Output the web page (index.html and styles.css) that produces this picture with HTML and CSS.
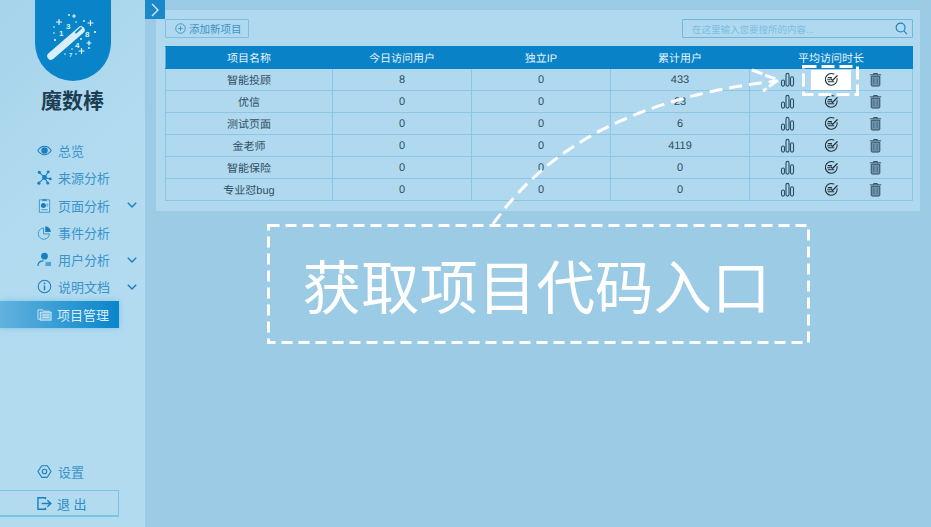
FILE: index.html
```html
<!DOCTYPE html>
<html lang="zh-CN">
<head>
    <meta charset="UTF-8">
    <meta name="viewport" content="width=device-width, initial-scale=1.0">
    <title>魔数棒</title>
    <link rel="stylesheet" href="styles.css">
</head>
<body>
    <!-- shared table icons -->
    <svg class="defs" width="0" height="0">
        <symbol id="i-bars" viewBox="0 0 16 16">
            <g fill="none" stroke="#2c5069" stroke-width="1.2">
                <rect x="1.6" y="8.5" width="3.2" height="6.5" rx="1.6"/>
                <rect x="6.4" y="1.5" width="3.2" height="13.5" rx="1.6"/>
                <rect x="11.2" y="5" width="3.2" height="10" rx="1.6"/>
            </g>
        </symbol>
        <symbol id="i-code" viewBox="0 0 16 16">
            <g fill="none" stroke="#1f2f3a" stroke-width="1.1" stroke-linecap="round">
                <path d="M14 7A6.3 6.3 0 1 1 10.5 2.2"/>
                <path d="M4.500 6h3.500M3.800 8.200h2.700M4.500 10.500h6"/>
                <path d="M7.500 7.500l1.600 1.500 4.900-5" stroke-width="1.3"/>
            </g>
        </symbol>
        <symbol id="i-trash" viewBox="0 0 16 16">
            <path d="M3.4 4.500h9.200v9.300a1.200 1.200 0 0 1-1.200 1.200H4.600a1.200 1.200 0 0 1-1.200-1.200z" fill="#6f93a8" stroke="#2c4a5e" stroke-width="1"/>
            <path d="M2 3h12M6 3V1.600h4V3" fill="none" stroke="#2c4a5e" stroke-width="1"/>
            <path d="M6.200 6.500v6.500M9.800 6.500v6.500" fill="none" stroke="#3f6378" stroke-width="0.8"/>
        </symbol>
    </svg>

    <div class="page">
        <aside class="sidebar">
            <div class="logo">
                <svg class="logo-badge" width="76" height="81" viewBox="0 0 76 81">
                    <path d="M0 0H76V43A38 38 0 0 1 0 43z" fill="#0a84c9"/>
                    <path d="M16 56L46 30" stroke="#d9eef8" stroke-width="7.5" stroke-linecap="round"/>
                    <path d="M41 32.500l5-4.500" stroke="#0a84c9" stroke-width="1.8" stroke-linecap="round"/>
                    <g fill="#d9eef8" font-family="Liberation Sans, sans-serif" font-size="8" font-weight="700">
                        <text x="24" y="36">1</text>
                        <text x="31" y="29">3</text>
                        <text x="50" y="37">8</text>
                        <text x="40" y="48">4</text>
                        <text x="34" y="57" font-size="6">7</text>
                    </g>
                    <g stroke="#e8f5fb" stroke-width="1.2" stroke-linecap="round">
                        <path d="M21.500 22h5M24 19.500v5M53 23h5M55.500 20.500v5M44 51h5M46.500 48.500v5M52 43h4M54 41v4M37.500 16h3M39 14.500v3"/>
                    </g>
                    <g fill="#e8f5fb">
                        <circle cx="19" cy="27" r="0.8"/><circle cx="19" cy="33" r="0.8"/><circle cx="20" cy="40" r="1.1"/>
                        <circle cx="34" cy="15" r="0.9"/><circle cx="41" cy="22" r="0.8"/><circle cx="49" cy="21" r="0.9"/>
                        <circle cx="60" cy="32" r="1.1"/><circle cx="46" cy="39" r="0.9"/><circle cx="37" cy="49" r="0.8"/>
                        <circle cx="30" cy="54" r="0.8"/><circle cx="41" cy="54" r="0.8"/><circle cx="54" cy="48" r="0.9"/>
                    </g>
                </svg>
                <div class="logo-name">魔数棒</div>
            </div>

            <nav class="nav">
                <a class="nav-item">
                    <svg class="nav-icon" viewBox="0 0 16 16"><path d="M.8 8C3 4.800 5.300 3.500 8 3.500S13 4.800 15.200 8C13 11.200 10.700 12.500 8 12.500S3 11.200.8 8z" fill="none" stroke="#1a7fbe" stroke-width="1.1"/><circle cx="8" cy="8" r="3.4" fill="#1a7fbe"/></svg>
                    <span>总览</span>
                </a>
                <a class="nav-item">
                    <svg class="nav-icon" viewBox="0 0 16 16"><path d="M2.500 2.500L8 8M12 2L8 8M2 14L8 8M14 9.500L8 8M11.500 14L8 8" stroke="#1a7fbe" stroke-width="1.1"/><g fill="#1a7fbe"><circle cx="8" cy="8" r="2.6"/><circle cx="2.5" cy="2.5" r="1.7"/><circle cx="12" cy="2" r="1.5"/><circle cx="2" cy="14" r="1.7"/><circle cx="14.2" cy="9.5" r="1.5"/><circle cx="11.5" cy="14" r="1.5"/></g></svg>
                    <span>来源分析</span>
                </a>
                <a class="nav-item">
                    <svg class="nav-icon" viewBox="0 0 16 16"><path d="M5.500 2H2.500v13.200h11V2h-3" fill="#c2e2f2" stroke="#3b93cc" stroke-width="1"/><rect x="5.5" y="1" width="5" height="2.4" fill="#3b93cc"/><circle cx="6.8" cy="8" r="2.7" fill="#1a7fbe"/><path d="M10 6.500h2M10 8.500h2M4.500 12.500h7" stroke="#3b93cc" stroke-width="1"/></svg>
                    <span>页面分析</span>
                    <svg class="nav-arrow" viewBox="0 0 10 6"><path d="M.8.800L5 5 9.200.800" fill="none" stroke="#1a7fbe" stroke-width="1.4"/></svg>
                </a>
                <a class="nav-item">
                    <svg class="nav-icon" viewBox="0 0 16 16"><path d="M7 3.200A6 6 0 1 0 13.300 9.500H7z" fill="none" stroke="#3b93cc" stroke-width="1"/><path d="M8.800 1.300A6 6 0 0 1 14.800 7.500H8.800z" fill="#1a7fbe"/></svg>
                    <span>事件分析</span>
                </a>
                <a class="nav-item">
                    <svg class="nav-icon" viewBox="0 0 16 16"><circle cx="8" cy="4.5" r="3.6" fill="#1a7fbe"/><path d="M1 15c0-3.800 2.800-5.500 6-5.500" fill="none" stroke="#1a7fbe" stroke-width="1.2"/><path d="M9 10.500h6v4.500H9z" fill="#4fa3d6"/></svg>
                    <span>用户分析</span>
                    <svg class="nav-arrow" viewBox="0 0 10 6"><path d="M.8.800L5 5 9.200.800" fill="none" stroke="#1a7fbe" stroke-width="1.4"/></svg>
                </a>
                <a class="nav-item">
                    <svg class="nav-icon" viewBox="0 0 16 16"><circle cx="8" cy="8" r="6.7" fill="none" stroke="#1a7fbe" stroke-width="1.1"/><path d="M8 7v5" stroke="#1a7fbe" stroke-width="1.5"/><circle cx="8" cy="4.7" r="1" fill="#1a7fbe"/></svg>
                    <span>说明文档</span>
                    <svg class="nav-arrow" viewBox="0 0 10 6"><path d="M.8.800L5 5 9.200.800" fill="none" stroke="#1a7fbe" stroke-width="1.4"/></svg>
                </a>
                <a class="nav-item active">
                    <svg class="nav-icon" viewBox="0 0 16 16"><path d="M1 3h5l1 1.500h6V13H1z" fill="none" stroke="#cfe8f5" stroke-width="1"/><rect x="3.5" y="5.500" width="11.500" height="8.500" fill="#7fbfe3" stroke="#cfe8f5" stroke-width="1"/><path d="M6 8.500h7M6 11h7" stroke="#e2f2fa" stroke-width="1"/></svg>
                    <span>项目管理</span>
                </a>
            </nav>

            <div class="side-bottom">
                <a class="nav-item settings">
                    <svg class="nav-icon" viewBox="0 0 16 16"><path d="M5 1.800h6L15 8l-4 6.200H5L1 8z" fill="none" stroke="#1a7fbe" stroke-width="1.2" stroke-linejoin="round"/><circle cx="8" cy="8" r="2.4" fill="none" stroke="#1a7fbe" stroke-width="1.2"/></svg>
                    <span>设置</span>
                </a>
                <a class="logout">
                    <svg class="nav-icon" viewBox="0 0 16 16"><path d="M9 3.500V1.800H1v12.400h8v-1.700" fill="none" stroke="#1a7fbe" stroke-width="1.5"/><path d="M5 8h9M11 4.500L14.800 8 11 11.500" fill="none" stroke="#1a7fbe" stroke-width="1.5"/></svg>
                    <span>退 出</span>
                </a>
            </div>
        </aside>

        <main class="main">
            <div class="panel">
                <div class="toolbar">
                    <button class="add-btn">
                        <svg width="11" height="11" viewBox="0 0 12 12"><circle cx="6" cy="6" r="5.2" fill="none" stroke="#3b93cc"/><path d="M3.500 6h5M6 3.500v5" stroke="#3b93cc"/></svg>
                        添加新项目
                    </button>
                    <div class="search">
                        <span class="search-text">在这里输入您要搜所的内容...</span>
                        <svg width="13" height="13" viewBox="0 0 14 14"><circle cx="6" cy="6" r="4.8" fill="none" stroke="#1a7fbe" stroke-width="1.2"/><path d="M9.500 9.500L13 13" stroke="#1a7fbe" stroke-width="1.2"/></svg>
                    </div>
                </div>

                <table class="project-table">
                    <colgroup>
                        <col class="col-name"><col class="col-num"><col class="col-num"><col class="col-num"><col>
                    </colgroup>
                    <thead>
                        <tr><th>项目名称</th><th>今日访问用户</th><th>独立IP</th><th>累计用户</th><th>平均访问时长</th></tr>
                    </thead>
                    <tbody>
                        <tr>
                            <td>智能投顾</td><td>8</td><td>0</td><td>433</td>
                            <td><div class="ops"><span class="op"><svg><use href="#i-bars"/></svg></span><span class="op lit"><svg><use href="#i-code"/></svg></span><span class="op"><svg><use href="#i-trash"/></svg></span></div></td>
                        </tr>
                        <tr>
                            <td>优信</td><td>0</td><td>0</td><td>23</td>
                            <td><div class="ops"><span class="op"><svg><use href="#i-bars"/></svg></span><span class="op"><svg><use href="#i-code"/></svg></span><span class="op"><svg><use href="#i-trash"/></svg></span></div></td>
                        </tr>
                        <tr>
                            <td>测试页面</td><td>0</td><td>0</td><td>6</td>
                            <td><div class="ops"><span class="op"><svg><use href="#i-bars"/></svg></span><span class="op"><svg><use href="#i-code"/></svg></span><span class="op"><svg><use href="#i-trash"/></svg></span></div></td>
                        </tr>
                        <tr>
                            <td>金老师</td><td>0</td><td>0</td><td>4119</td>
                            <td><div class="ops"><span class="op"><svg><use href="#i-bars"/></svg></span><span class="op"><svg><use href="#i-code"/></svg></span><span class="op"><svg><use href="#i-trash"/></svg></span></div></td>
                        </tr>
                        <tr>
                            <td>智能保险</td><td>0</td><td>0</td><td>0</td>
                            <td><div class="ops"><span class="op"><svg><use href="#i-bars"/></svg></span><span class="op"><svg><use href="#i-code"/></svg></span><span class="op"><svg><use href="#i-trash"/></svg></span></div></td>
                        </tr>
                        <tr>
                            <td>专业怼bug</td><td>0</td><td>0</td><td>0</td>
                            <td><div class="ops"><span class="op"><svg><use href="#i-bars"/></svg></span><span class="op"><svg><use href="#i-code"/></svg></span><span class="op"><svg><use href="#i-trash"/></svg></span></div></td>
                        </tr>
                    </tbody>
                </table>
            </div>

            <div class="callout">获取项目代码入口</div>
        </main>

        <button class="toggle">
            <svg width="8" height="14" viewBox="0 0 8 14"><path d="M1 1l6 6-6 6" fill="none" stroke="#d9eef8" stroke-width="1.3"/></svg>
        </button>

        <!-- annotation drawn over the table -->
        <svg class="annotation" width="931" height="527" viewBox="0 0 931 527">
            <rect x="268.5" y="225.5" width="540" height="117" fill="none" stroke="#fff" stroke-width="3" stroke-dasharray="11 6"/>
            <path d="M493 224C535 165 610 100 776 81" fill="none" stroke="#fff" stroke-width="3" stroke-dasharray="13 7"/>
            <path d="M752 70L778 80 763 91" fill="none" stroke="#fff" stroke-width="3" stroke-dasharray="11 3"/>
            <rect x="803.5" y="66.5" width="54" height="28" fill="none" stroke="#fff" stroke-width="3" stroke-dasharray="13 5"/>
        </svg>
    </div>
</body>
</html>
```

FILE: styles.css
```css
* {
    box-sizing: border-box;
}
body {
    margin: 0;
    font-family: "Liberation Sans", "Noto Sans CJK SC", sans-serif;
    background: #9ccbe5;
    overflow: hidden;
}
.defs {
    position: absolute;
}
.page {
    position: relative;
    display: flex;
    width: 931px;
    height: 527px;
}

/* sidebar */
.sidebar {
    width: 145px;
    flex-shrink: 0;
    display: flex;
    flex-direction: column;
    background: linear-gradient(135deg, #a6d3eb, #b2dbf0 40%);
}
.logo {
    display: flex;
    flex-direction: column;
    align-items: center;
}
.logo-badge {
    display: block;
}
.logo-name {
    margin-top: 7px;
    font-size: 21px;
    line-height: 26px;
    font-weight: 700;
    color: #1c3d52;
}
.nav {
    margin-top: 23px;
    display: flex;
    flex-direction: column;
}
.nav-item {
    display: flex;
    align-items: center;
    height: 27.25px;
    padding-left: 37px;
    font-size: 13px;
    color: #3b93cc;
}
.nav-icon {
    width: 15px;
    height: 15px;
    margin-right: 6px;
    flex-shrink: 0;
}
.nav-arrow {
    width: 10px;
    height: 6px;
    margin-left: auto;
    margin-right: 8px;
}
.nav-item.active {
    width: 119px;
    color: #d8eef9;
    background: linear-gradient(90deg, #62b2dd, #0a85cb);
    box-shadow: 0 0 6px rgba(90, 178, 224, 0.6);
}
.nav-item.active .nav-icon {
    margin-right: 5px;
}
.side-bottom {
    margin-top: auto;
    padding-bottom: 10px;
}
.settings {
    margin-bottom: 5px;
}
.logout {
    display: flex;
    align-items: center;
    width: 119px;
    height: 27px;
    padding-left: 37px;
    font-size: 13px;
    color: #2c8bc8;
    border: 1px solid #7cc3e3;
    border-left: none;
    border-bottom-width: 2px;
}
.logout .nav-icon {
    margin-right: 5px;
}

/* main area */
.main {
    flex: 1;
    min-width: 0;
    padding: 10px 11px 0;
}
.panel {
    height: 201px;
    padding: 9px 7px 0 9px;
    background: #b0d9ef;
}
.toolbar {
    display: flex;
    justify-content: space-between;
}
.add-btn {
    display: flex;
    align-items: center;
    gap: 3px;
    width: 84px;
    height: 19px;
    padding: 0 0 0 9px;
    font-family: inherit;
    font-size: 10.5px;
    color: #3b93cc;
    background: none;
    border: 1px solid #7fbfe3;
    border-radius: 1px;
}
.search {
    display: flex;
    align-items: center;
    justify-content: space-between;
    width: 231px;
    height: 19px;
    padding: 0 4px 0 9px;
    border: 1px solid #6fb7de;
    border-radius: 1px;
}
.search-text {
    font-size: 9.5px;
    color: #7cbde0;
}

/* table */
.project-table {
    width: 748px;
    margin-top: 8px;
    border-collapse: collapse;
    table-layout: fixed;
    font-size: 11px;
    color: #2f4f63;
    text-align: center;
    text-rendering: geometricPrecision;
}
.col-name {
    width: 167px;
}
.col-num {
    width: 139px;
}
.project-table th {
    height: 22px;
    padding: 0;
    font-weight: 400;
    color: #e3f3fb;
    background: #0a82c8;
    border: 1px solid #0a82c8;
    border-left-color: #5fb0dd;
}
.project-table td {
    height: 22px;
    padding: 0;
    border: 1px solid #8cc6e6;
}
.ops {
    display: flex;
    justify-content: center;
    align-items: center;
    height: 21px;
}
.op {
    display: flex;
    justify-content: center;
    align-items: center;
    width: 44px;
    height: 20px;
}
.op svg {
    width: 15px;
    height: 15px;
}
.op.lit {
    width: 40px;
    margin: 0 2px;
    background: #fff;
}

/* callout */
.callout {
    width: 542px;
    height: 119px;
    margin: 13px 0 0 111px;
    padding-right: 3px;
    display: flex;
    align-items: center;
    justify-content: center;
    font-size: 58.5px;
    color: #fff;
}

/* overlays */
.toggle {
    position: absolute;
    left: 145px;
    top: 0;
    display: flex;
    align-items: center;
    justify-content: center;
    width: 20px;
    height: 19px;
    padding: 0;
    background: #1a88c9;
    border: none;
}
.annotation {
    position: absolute;
    left: 0;
    top: 0;
    pointer-events: none;
}
```
